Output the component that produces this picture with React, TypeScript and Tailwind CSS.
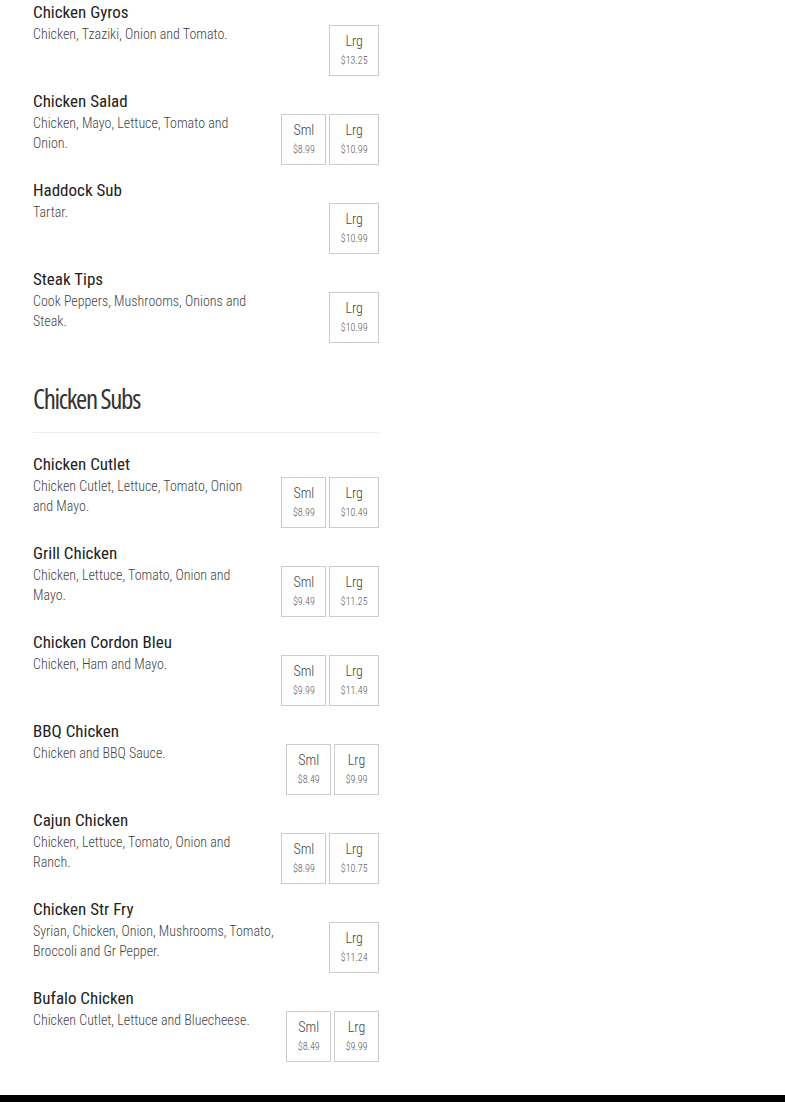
type Price = { size: string; price: string }
type Item = { name: string; desc: string; prices: Price[] }

// descriptions keep the original line breaks ("\n")
const topItems: Item[] = [
  { name: 'Chicken Gyros', desc: 'Chicken, Tzaziki, Onion and Tomato.', prices: [{ size: 'Lrg', price: '$13.25' }] },
  {
    name: 'Chicken Salad',
    desc: 'Chicken, Mayo, Lettuce, Tomato and\nOnion.',
    prices: [
      { size: 'Sml', price: '$8.99' },
      { size: 'Lrg', price: '$10.99' },
    ],
  },
  { name: 'Haddock Sub', desc: 'Tartar.', prices: [{ size: 'Lrg', price: '$10.99' }] },
  { name: 'Steak Tips', desc: 'Cook Peppers, Mushrooms, Onions and\nSteak.', prices: [{ size: 'Lrg', price: '$10.99' }] },
]

const chickenSubs: Item[] = [
  {
    name: 'Chicken Cutlet',
    desc: 'Chicken Cutlet, Lettuce, Tomato, Onion\nand Mayo.',
    prices: [
      { size: 'Sml', price: '$8.99' },
      { size: 'Lrg', price: '$10.49' },
    ],
  },
  {
    name: 'Grill Chicken',
    desc: 'Chicken, Lettuce, Tomato, Onion and\nMayo.',
    prices: [
      { size: 'Sml', price: '$9.49' },
      { size: 'Lrg', price: '$11.25' },
    ],
  },
  {
    name: 'Chicken Cordon Bleu',
    desc: 'Chicken, Ham and Mayo.',
    prices: [
      { size: 'Sml', price: '$9.99' },
      { size: 'Lrg', price: '$11.49' },
    ],
  },
  {
    name: 'BBQ Chicken',
    desc: 'Chicken and BBQ Sauce.',
    prices: [
      { size: 'Sml', price: '$8.49' },
      { size: 'Lrg', price: '$9.99' },
    ],
  },
  {
    name: 'Cajun Chicken',
    desc: 'Chicken, Lettuce, Tomato, Onion and\nRanch.',
    prices: [
      { size: 'Sml', price: '$8.99' },
      { size: 'Lrg', price: '$10.75' },
    ],
  },
  {
    name: 'Chicken Str Fry',
    desc: 'Syrian, Chicken, Onion, Mushrooms, Tomato,\nBroccoli and Gr Pepper.',
    prices: [{ size: 'Lrg', price: '$11.24' }],
  },
  {
    name: 'Bufalo Chicken',
    desc: 'Chicken Cutlet, Lettuce and Bluecheese.',
    prices: [
      { size: 'Sml', price: '$8.49' },
      { size: 'Lrg', price: '$9.99' },
    ],
  },
]

function MenuItem({ item }: { item: Item }) {
  return (
    <div className="flex items-start gap-4 mb-[13px]">
      <div className="flex-1 min-w-0">
        <h3 className="text-[17px] leading-[24px] text-[#222]">{item.name}</h3>
        <p className="text-[14px] leading-[20px] font-light text-[#444] whitespace-pre-line">{item.desc}</p>
      </div>
      <div className="flex gap-[3px] mt-[25px]">
        {item.prices.map((p) => (
          <div key={p.size} className="border border-[#ccc] px-[10.5px] pt-[6px] pb-[6px] text-center">
            <div className="text-[14px] leading-[18px] font-light text-[#444]">{p.size}</div>
            <div className="text-[10px] leading-[16px] mt-[3px] font-light text-[#555]">{p.price}</div>
          </div>
        ))}
      </div>
    </div>
  )
}

export default function App() {
  return (
    <div className="min-h-[1102px] bg-white flex flex-col font-['Roboto_Condensed',Roboto,'Liberation_Sans',sans-serif]">
      <main className="w-[346px] ml-[33px] flex-1 pb-[20px]">
        {topItems.map((item) => (
          <MenuItem key={item.name} item={item} />
        ))}

        {/* Chicken Subs */}
        <h2 className="mt-[40px] text-[27px] leading-[32px] tracking-[-1.3px] text-[#333] font-['Open_Sans',sans-serif] font-stretch-condensed">
          Chicken Subs
        </h2>
        <hr className="mt-[17px] mb-[19px] border-0 border-t border-[#eee]" />
        {chickenSubs.map((item) => (
          <MenuItem key={item.name} item={item} />
        ))}
      </main>
      <footer className="h-[8px] bg-black" />
    </div>
  )
}
